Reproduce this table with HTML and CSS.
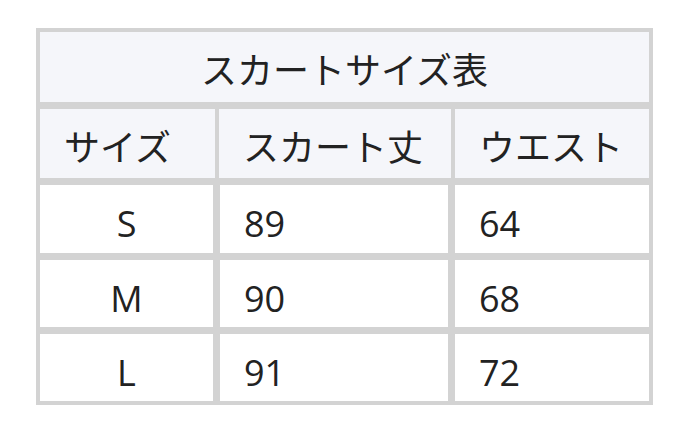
FILE: index.html
```html
<!DOCTYPE html>
<html lang="ja">
<head>
<meta charset="utf-8">
<link rel="stylesheet" href="styles.css">
</head>
<body>
<div class="table">
  <div class="caption">スカートサイズ表</div>
  <div class="row head">
    <div class="cell c1">サイズ</div>
    <div class="cell c2">スカート丈</div>
    <div class="cell c3">ウエスト</div>
  </div>
  <div class="row body r1">
    <div class="cell c1 center">S</div>
    <div class="cell c2">89</div>
    <div class="cell c3">64</div>
  </div>
  <div class="row body r2">
    <div class="cell c1 center">M</div>
    <div class="cell c2">90</div>
    <div class="cell c3">68</div>
  </div>
  <div class="row body r3">
    <div class="cell c1 center">L</div>
    <div class="cell c2">91</div>
    <div class="cell c3">72</div>
  </div>
</div>
</body>
</html>
```

FILE: styles.css
```css
html, body {
  margin: 0;
  padding: 0;
  background: #ffffff;
}
body {
  padding: 28px 0 0 36px;
  font-family: "Open Sans", "Noto Sans CJK JP", sans-serif;
  font-size: 36px;
  line-height: 1.2;
  color: #222222;
}
.table {
  width: 609px;
  border: 4px solid #d3d3d3;
  display: flex;
  flex-direction: column;
  background: #d3d3d3;
}
.caption {
  height: 70px;
  box-sizing: border-box;
  padding-top: 8px;
  background: #f5f6fa;
  display: flex;
  align-items: center;
  justify-content: center;
  margin-bottom: 7px;
}
.row {
  display: flex;
}
.cell {
  display: flex;
  align-items: center;
  padding-left: 24px;
  box-sizing: border-box;
}
.head {
  height: 69px;
  margin-bottom: 7px;
  column-gap: 4px;
}
.head .cell {
  background: #f5f6fa;
  padding-top: 8px;
}
.head .c1 { width: 175px; }
.head .c2 { width: 232px; }
.head .c3 { width: 194px; }
.body {
  column-gap: 7px;
}
.body .cell {
  background: #ffffff;
  padding-top: 10px;
}
.body .c1 { width: 173px; }
.body .c2 { width: 228px; }
.body .c3 { width: 194px; }
.center {
  justify-content: center;
  padding-left: 0;
}
.r1 { height: 68px; margin-bottom: 7px; }
.r2 { height: 67px; margin-bottom: 7px; }
.r3 { height: 67px; }
```
